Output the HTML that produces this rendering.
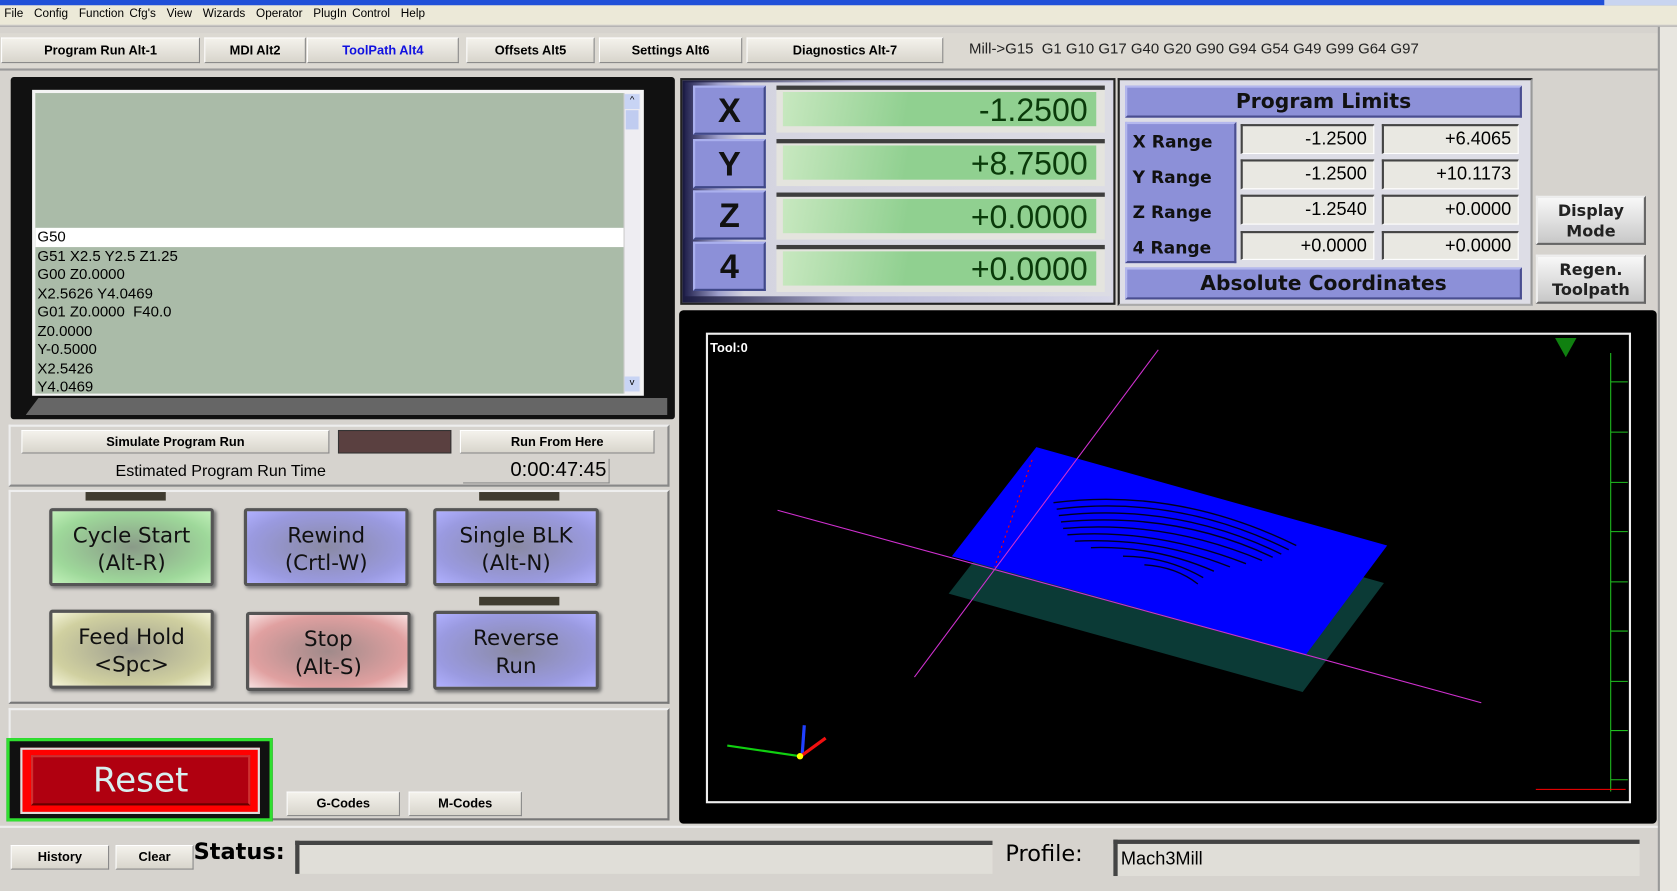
<!DOCTYPE html>
<html><head><meta charset="utf-8"><style>
*{box-sizing:border-box;margin:0;padding:0}
html,body{width:1677px;height:891px;overflow:hidden;background:#d6d3ce}
#w{position:absolute;left:0;top:0;width:1568px;height:833px;transform:scale(1.06952,1.06962);transform-origin:0 0;font-family:"Liberation Sans",sans-serif;background:#d6d3ce}
.a{position:absolute}
.btn{position:absolute;background:linear-gradient(#f4f2ec,#d8d5cc);border:1px solid #fff;border-right-color:#888;border-bottom-color:#888;font-size:12px;font-weight:bold;text-align:center;color:#000}
.bb{position:absolute;border:3px solid #555;border-radius:3px;font-family:"DejaVu Sans",sans-serif;font-size:20px;text-align:center;line-height:26px;color:#111;padding-top:9px;box-shadow:2px 2px 3px #777}
.lbl{position:absolute;background:#8c90d8;border:2px solid #b4b8ee;border-right-color:#4a4e90;border-bottom-color:#4a4e90;font-family:"DejaVu Sans",sans-serif;font-weight:bold;font-size:16px;color:#111}
.val{position:absolute;background:#e9e8e2;border:1px solid #fff;border-top:2px solid #444;border-left:2px solid #444;font-size:17px;text-align:right;padding-right:6px;line-height:24px}
.dro{position:absolute;left:726px;width:307px;height:44px;background:#e4e4de;border-top:4px solid #3e3e3e}
.dro div{position:absolute;left:6px;right:8px;top:2px;bottom:6px;background:linear-gradient(100deg,#c8e8c0,#90d090 40%,#90d090);text-align:right;font-size:30px;color:#0a3a0a;line-height:36px;padding-right:8px}
.ax{position:absolute;left:648px;width:68px;height:46px;background:#8c90d8;border:2px solid #aab0ee;border-right-color:#404888;border-bottom-color:#404888;font-size:32px;font-weight:bold;text-align:center;line-height:42px;color:#111;font-family:"Liberation Sans",sans-serif}
.g{font-size:14px;line-height:17.5px;padding-left:2px}
</style></head><body><div id="w">
<div class="a" style="left:0;top:0;width:1568px;height:5px;background:#2050d8"></div>
<div class="a" style="left:1500px;top:0;width:68px;height:5px;background:#c8d4f0"></div>
<div class="a" style="left:0;top:5px;width:1568px;height:18px;background:#ece9d8;font-size:11px;line-height:16px;padding-left:4px;word-spacing:2px">File &nbsp;Config &nbsp;Function Cfg's &nbsp;View &nbsp;Wizards &nbsp;Operator &nbsp;PlugIn Control &nbsp;Help</div>
<div class="a" style="left:0;top:24px;width:1568px;height:1px;background:#aaa"></div>
<div class="a" style="left:0;top:31px;width:1552px;height:35px;background:#dcd9d2;border-bottom:2px solid #999"></div>
<div class="btn" style="left:1px;top:35px;width:186px;height:24px;line-height:22px">Program Run Alt-1</div>
<div class="btn" style="left:191px;top:35px;width:95px;height:24px;line-height:22px">MDI Alt2</div>
<div class="btn" style="left:287px;top:35px;width:142px;height:24px;line-height:22px;color:#1010e0">ToolPath Alt4</div>
<div class="btn" style="left:436px;top:35px;width:120px;height:24px;line-height:22px">Offsets Alt5</div>
<div class="btn" style="left:560px;top:35px;width:134px;height:24px;line-height:22px">Settings Alt6</div>
<div class="btn" style="left:698px;top:35px;width:184px;height:24px;line-height:22px">Diagnostics Alt-7</div>
<div class="a" style="left:906px;top:37px;font-size:14px;color:#222">Mill-&gt;G15 &nbsp;G1 G10 G17 G40 G20 G90 G94 G54 G49 G99 G64 G97</div>
<div class="a" style="left:1550px;top:25px;width:18px;height:808px;background:#e8e6e0;border-left:2px solid #999"></div>
<!-- gcode -->
<div class="a" style="left:10px;top:72px;width:621px;height:320px;background:#111;border-radius:3px"></div>
<div class="a" style="left:24px;top:372px;width:600px;height:16px;background:#666;clip-path:polygon(2% 0,100% 0,100% 100%,0 100%)"></div>
<div class="a" style="left:30px;top:84px;width:572px;height:286px;background:#f4f4f4"></div>
<div class="a" style="left:33px;top:87px;width:550px;height:281px;background:#aabba8;overflow:hidden;padding-top:126px">
<div class="g" style="background:#fff">G50</div><div class="g">G51 X2.5 Y2.5 Z1.25</div><div class="g">G00 Z0.0000</div><div class="g">X2.5626 Y4.0469</div><div class="g">G01 Z0.0000 &nbsp;F40.0</div><div class="g">Z0.0000</div><div class="g">Y-0.5000</div><div class="g">X2.5426</div><div class="g">Y4.0469</div></div>
<div class="a" style="left:583px;top:87px;width:16px;height:281px;background:#eeedf2;border-left:1px solid #ccc"></div>
<div class="a" style="left:584px;top:88px;width:14px;height:14px;background:#c8d4f4;font-size:9px;text-align:center">^</div>
<div class="a" style="left:585px;top:103px;width:12px;height:18px;background:#c0ccf0"></div>
<div class="a" style="left:584px;top:352px;width:14px;height:14px;background:#c8d4f4;font-size:9px;text-align:center">v</div>
<!-- simulate -->
<div class="a" style="left:8px;top:397px;width:618px;height:58px;border:2px solid #eee;border-right-color:#888;border-bottom-color:#888"></div>
<div class="btn" style="left:20px;top:402px;width:288px;height:22px;line-height:20px">Simulate Program Run</div>
<div class="a" style="left:316px;top:402px;width:106px;height:22px;background:#5a4040;border:1px solid #333"></div>
<div class="btn" style="left:430px;top:402px;width:182px;height:22px;line-height:20px">Run From Here</div>
<div class="a" style="left:108px;top:432px;font-size:15px">Estimated Program Run Time</div>
<div class="a" style="left:433px;top:429px;width:137px;height:23px;border-bottom:1px solid #888;border-right:1px solid #888;font-size:19px;text-align:right;padding-right:2px">0:00:47:45</div>
<!-- buttons panel -->
<div class="a" style="left:8px;top:458px;width:618px;height:200px;border:2px solid #eee;border-right-color:#777;border-bottom-color:#777"></div>
<div class="a" style="left:80px;top:460px;width:75px;height:8px;background:#403c30"></div>
<div class="a" style="left:448px;top:460px;width:75px;height:8px;background:#403c30"></div>
<div class="a" style="left:448px;top:558px;width:75px;height:8px;background:#403c30"></div>
<div class="bb" style="left:46px;top:475px;width:154px;height:73px;background:radial-gradient(#8a9a88,#9ed89a 70%,#c0f0b8)">Cycle Start<br>(Alt-R)</div>
<div class="bb" style="left:228px;top:475px;width:154px;height:73px;background:radial-gradient(#8a8aa4,#9a9ae0 70%,#b0b0ff)">Rewind<br>(Crtl-W)</div>
<div class="bb" style="left:405px;top:475px;width:155px;height:73px;background:radial-gradient(#8a8aa4,#9a9ae0 70%,#b0b0ff)">Single BLK<br>(Alt-N)</div>
<div class="bb" style="left:46px;top:570px;width:154px;height:74px;background:radial-gradient(#a0a090,#d0d0a0 70%,#f4f4d8)">Feed Hold<br>&lt;Spc&gt;</div>
<div class="bb" style="left:230px;top:572px;width:154px;height:74px;background:radial-gradient(#a08a8a,#e0a0a0 70%,#f8e0e0)">Stop<br>(Alt-S)</div>
<div class="bb" style="left:405px;top:571px;width:155px;height:74px;background:radial-gradient(#8a8aa4,#9a9ae0 70%,#b0b0ff)">Reverse<br>Run</div>
<!-- reset panel -->
<div class="a" style="left:8px;top:662px;width:618px;height:105px;border:2px solid #eee;border-right-color:#777;border-bottom-color:#777"></div>
<div class="a" style="left:6px;top:690px;width:249px;height:78px;background:#111;border:3px solid #30e030"></div>
<div class="a" style="left:19px;top:699px;width:224px;height:62px;border:2px solid #ddd;background:#f00"></div>
<div class="a" style="left:29px;top:706px;width:205px;height:47px;background:#b00010;border:2px solid #d03030;border-bottom-color:#600;font-family:'DejaVu Sans',sans-serif;font-size:32px;color:#d8f0f0;text-align:center;line-height:42px">Reset</div>
<div class="btn" style="left:268px;top:740px;width:106px;height:23px;line-height:21px">G-Codes</div>
<div class="btn" style="left:382px;top:740px;width:106px;height:23px;line-height:21px">M-Codes</div>
<!-- DRO -->
<div class="a" style="left:636px;top:73px;width:407px;height:212px;background:linear-gradient(90deg,#1a1a40,#b8b8d8 40%,#d8d8e8);border:2px solid #222"></div>
<div class="a" style="left:640px;top:77px;width:399px;height:200px;background:linear-gradient(90deg,#20204c,#9fa0cc 8%,#d4d4e0 14%,#dcdce4)"></div>
<div class="ax" style="top:80px">X</div><div class="ax" style="top:130px">Y</div><div class="ax" style="top:178px">Z</div><div class="ax" style="top:226px">4</div>
<div class="dro" style="top:80px"><div>-1.2500</div></div>
<div class="dro" style="top:130px"><div>+8.7500</div></div>
<div class="dro" style="top:180px"><div>+0.0000</div></div>
<div class="dro" style="top:229px"><div>+0.0000</div></div>
<!-- limits -->
<div class="a" style="left:1045px;top:73px;width:388px;height:213px;background:#dddde6;border:2px solid #222;border-right-color:#999;border-bottom-color:#aaa"></div>
<div class="lbl" style="left:1052px;top:80px;width:371px;height:30px;text-align:center;line-height:26px;font-size:19px">Program Limits</div>
<div class="lbl" style="left:1052px;top:114px;width:104px;height:132px;line-height:33px;padding-left:5px">X Range<br>Y Range<br>Z Range<br>4 Range</div>
<div class="val" style="left:1160px;top:116px;width:125px;height:28px">-1.2500</div>
<div class="val" style="left:1292px;top:116px;width:128px;height:28px">+6.4065</div>
<div class="val" style="left:1160px;top:149px;width:125px;height:28px">-1.2500</div>
<div class="val" style="left:1292px;top:149px;width:128px;height:28px">+10.1173</div>
<div class="val" style="left:1160px;top:182px;width:125px;height:28px">-1.2540</div>
<div class="val" style="left:1292px;top:182px;width:128px;height:28px">+0.0000</div>
<div class="val" style="left:1160px;top:216px;width:125px;height:27px">+0.0000</div>
<div class="val" style="left:1292px;top:216px;width:128px;height:27px">+0.0000</div>
<div class="lbl" style="left:1052px;top:250px;width:371px;height:30px;text-align:center;line-height:26px;font-size:19px">Absolute Coordinates</div>
<div class="a" style="left:1436px;top:183px;width:103px;height:46px;background:linear-gradient(#f8f8f8,#c8c8c8);border:2px solid #eee;border-right-color:#666;border-bottom-color:#666;font-family:'DejaVu Sans',sans-serif;font-weight:bold;font-size:15px;text-align:center;line-height:19px;padding-top:3px;color:#222">Display<br>Mode</div>
<div class="a" style="left:1436px;top:238px;width:103px;height:46px;background:linear-gradient(#f8f8f8,#c8c8c8);border:2px solid #eee;border-right-color:#666;border-bottom-color:#666;font-family:'DejaVu Sans',sans-serif;font-weight:bold;font-size:15px;text-align:center;line-height:19px;padding-top:3px;color:#222">Regen.<br>Toolpath</div>
<!-- toolpath -->
<div class="a" style="left:635px;top:290px;width:914px;height:480px;background:#000;border-radius:4px"></div>
<div class="a" style="left:660px;top:311px;width:865px;height:440px;border:2px solid #eee"></div>
<div class="a" style="left:664px;top:318px;color:#fff;font-size:12px;font-weight:bold">Tool:0</div>
<svg class="a" style="left:0;top:0" width="1568" height="833">
<polygon points="966,453 1294,545 1218,647 887,555" fill="#0b3a36"/>
<polygon points="969,418 1297,510 1221,612 890,520" fill="#0000ff"/>
<g fill="none" stroke="#000020" stroke-width="1.3">
<path d="M985,470 Q1100,455 1212,510"/><path d="M988,476 Q1100,462 1205,514"/><path d="M990,482 Q1100,470 1198,518"/><path d="M992,488 Q1100,478 1190,521"/><path d="M994,494 Q1090,486 1180,524"/><path d="M998,500 Q1080,494 1165,527"/><path d="M1005,506 Q1080,502 1150,530"/><path d="M1020,512 Q1080,510 1135,534"/><path d="M1050,520 Q1090,520 1125,540"/><path d="M1070,528 Q1100,530 1120,546"/></g>
<line x1="727" y1="477" x2="1385" y2="657" stroke="#d030d0" stroke-width="1"/>
<line x1="855" y1="633" x2="1083" y2="327" stroke="#d030d0" stroke-width="1"/>
<line x1="965" y1="430" x2="930" y2="530" stroke="#f00" stroke-dasharray="2,3"/>
<line x1="1506" y1="330" x2="1506" y2="740" stroke="#20c020"/>
<g stroke="#20c020"><line x1="1506" y1="357" x2="1522" y2="357"/><line x1="1506" y1="404" x2="1522" y2="404"/><line x1="1506" y1="451" x2="1522" y2="451"/><line x1="1506" y1="497" x2="1522" y2="497"/><line x1="1506" y1="544" x2="1522" y2="544"/><line x1="1506" y1="590" x2="1522" y2="590"/><line x1="1506" y1="637" x2="1522" y2="637"/><line x1="1506" y1="683" x2="1522" y2="683"/><line x1="1506" y1="729" x2="1522" y2="729"/></g>
<line x1="1436" y1="738" x2="1520" y2="738" stroke="#f00"/>
<polygon points="1454,316 1474,316 1464,334" fill="#108010"/>
<line x1="680" y1="697" x2="748" y2="707" stroke="#10d010" stroke-width="2"/>
<line x1="750" y1="706" x2="752" y2="678" stroke="#2040ff" stroke-width="3"/>
<line x1="750" y1="706" x2="772" y2="690" stroke="#f01010" stroke-width="3"/>
<circle cx="748" cy="707" r="3" fill="#ff0"/>
</svg>
<!-- status -->
<div class="a" style="left:0;top:772px;width:1550px;height:2px;background:#eee"></div>
<div class="btn" style="left:10px;top:790px;width:92px;height:23px;line-height:21px">History</div>
<div class="btn" style="left:108px;top:790px;width:73px;height:23px;line-height:21px">Clear</div>
<div class="a" style="left:181px;top:784px;font-family:'DejaVu Sans',sans-serif;font-weight:bold;font-size:21px">Status:</div>
<div class="a" style="left:276px;top:786px;width:652px;height:31px;background:#e0ded8;border-top:4px solid #444;border-left:4px solid #444"></div>
<div class="a" style="left:940px;top:786px;font-family:'DejaVu Sans',sans-serif;font-size:21px">Profile:</div>
<div class="a" style="left:1041px;top:785px;width:492px;height:34px;background:#e0ded8;border-top:4px solid #444;border-left:4px solid #444;font-size:17px;padding:4px 3px">Mach3Mill</div>
</div></body></html>
